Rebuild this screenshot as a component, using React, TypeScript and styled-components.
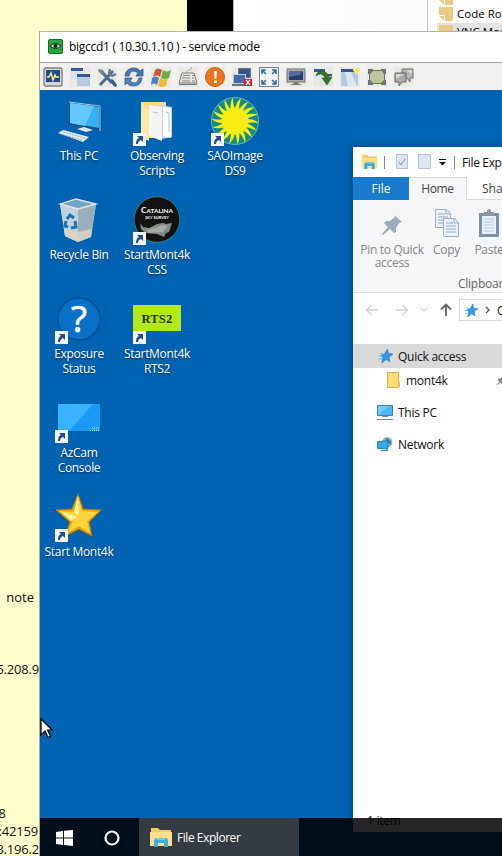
import React from 'react';
import styled, { createGlobalStyle } from 'styled-components';

const Global = createGlobalStyle`
  * { box-sizing: border-box; }
  html, body, #root { margin: 0; padding: 0; }
  body { font-family: "Open Sans", "Noto Sans", sans-serif; font-size: 12px; overflow: hidden; }
  svg { display: block; flex: none; }
`;

const Screen = styled.div`
  position: relative;
  width: 502px;
  height: 856px;
  overflow: hidden;
  background: #ffffcc;
`;

const Backdrop = styled.div`
  display: flex;
  height: 31px;
  padding-left: 187px;
`;
const BlackStrip = styled.div`
  width: 46px;
  background: #000;
`;
const BlankPane = styled.div`
  width: 194px;
  border-left: 1px solid #b5b5b5;
  background: linear-gradient(90deg, #fff, #fbfbfb);
`;
const BookmarkPane = styled.div`
  flex: 1;
  overflow: hidden;
  border-left: 1px solid #bdbdbd;
  background: #fff;
`;
const Bookmark = styled.div<{ $active?: boolean; $first?: boolean }>`
  display: flex;
  gap: 4px;
  height: ${p => (p.$first ? 5 : 18)}px;
  align-items: ${p => (p.$first ? 'flex-end' : 'center')};
  overflow: hidden;
  margin-left: 9px;
  padding-left: 2px;
  line-height: 18px;
  white-space: nowrap;
  font-size: 11.5px;
  background: ${p => (p.$active ? '#e2e2e2' : 'transparent')};
`;

const Notes = styled.div`
  position: absolute;
  left: 0;
  top: 588px;
  width: 39px;
  height: 268px;
  color: #111;
  font-size: 13px;
  line-height: 18px;
`;
const NoteLine = styled.div<{ $gap?: number; $shift?: number; $tight?: number }>`
  display: flex;
  justify-content: flex-end;
  margin-top: ${p => p.$gap || 0}px;
  padding-right: ${p => p.$shift || 0}px;
  letter-spacing: ${p => p.$tight || 0}px;
  white-space: nowrap;
`;

const RemoteWindow = styled.div`
  position: absolute;
  left: 39px;
  top: 31px;
  width: 480px;
  height: 825px;
  display: flex;
  flex-direction: column;
  border-left: 1px solid #a9a9a0;
  border-top: 1px solid #b3b3b3;
`;
const RemoteTitle = styled.div`
  display: flex;
  align-items: center;
  gap: 6px;
  height: 31px;
  padding: 0 0 1px 8px;
  background: #fff;
  color: #000;
  border-bottom: 1px solid #a0a0a0;
  letter-spacing: -0.28px;
  white-space: nowrap;
`;
const RemoteTools = styled.div`
  display: flex;
  align-items: center;
  gap: 7px;
  height: 27px;
  padding-left: 3px;
  background: #f0f0f0;
`;
const Desktop = styled.div`
  position: relative;
  flex: 1;
  overflow: hidden;
  background: #0063b1;
`;
const IconGrid = styled.div`
  display: grid;
  grid-auto-flow: column;
  grid-template-rows: repeat(5, 99px);
  grid-auto-columns: 78px;
  padding-top: 7px;
`;
const Shortcut = styled.div<{ $col: number; $row: number }>`
  grid-column: ${p => p.$col};
  grid-row: ${p => p.$row};
  display: flex;
  flex-direction: column;
  align-items: center;
`;
const IconFrame = styled.div`
  position: relative;
  width: 48px;
  height: 48px;
`;
const ArrowBadge = styled.svg`
  position: absolute;
  left: 0;
  bottom: -1px;
`;
const Label = styled.div`
  margin-top: 3px;
  color: #fff;
  font-size: 12px;
  line-height: 15px;
  letter-spacing: -0.32px;
  text-align: center;
  white-space: pre;
  text-shadow: 0 1px 2px rgba(0, 0, 0, 0.55);
`;

const Explorer = styled.div`
  position: absolute;
  left: 313px;
  top: 57px;
  width: 200px;
  height: 685px;
  display: flex;
  flex-direction: column;
  background: #fff;
  box-shadow: 0 0 7px rgba(0, 0, 0, 0.38);
  color: #111;
  letter-spacing: -0.25px;
  white-space: nowrap;
`;
const ExplorerTitle = styled.div`
  display: flex;
  align-items: center;
  height: 30px;
  padding-left: 8px;
`;
const TitleText = styled.span`
  letter-spacing: -0.35px;
`;
const Divider = styled.i<{ $left: number; $right: number }>`
  width: 1px;
  height: 13px;
  margin: 0 ${p => p.$right}px 0 ${p => p.$left}px;
  background: #8d8080;
`;
const Tabs = styled.div`
  display: flex;
  height: 23px;
`;
const Tab = styled.div<{ $kind: 'file' | 'active' | 'plain'; $w: number }>`
  display: flex;
  align-items: center;
  justify-content: ${p => (p.$kind === 'plain' ? 'flex-start' : 'center')};
  width: ${p => p.$w}px;
  flex: none;
  padding-left: ${p => (p.$kind === 'plain' ? 15 : 0)}px;
  padding-bottom: ${p => (p.$kind === 'active' ? 2 : 0)}px;
  letter-spacing: ${p => (p.$kind === 'active' ? -0.35 : 0)}px;
  color: ${p => (p.$kind === 'file' ? '#fff' : '#444')};
  background: ${p => ({ file: '#1979ca', active: '#f5f6f7', plain: '#fff' })[p.$kind]};
  border: solid #dadbdc;
  border-width: ${p => ({ file: '0', active: '1px 1px 0 0', plain: '0 0 1px 0' })[p.$kind]};
`;
const Ribbon = styled.div`
  display: flex;
  flex-direction: column;
  justify-content: space-between;
  height: 93px;
  background: #f5f6f7;
  border-bottom: 1px solid #dadbdc;
  color: #858585;
`;
const RibbonRow = styled.div`
  display: flex;
  align-items: flex-start;
  padding-top: 9px;
`;
const RibbonButton = styled.div<{ $w: number }>`
  display: flex;
  flex-direction: column;
  align-items: center;
  width: ${p => p.$w}px;
  flex: none;
  line-height: 13px;
  letter-spacing: -0.3px;
  text-align: center;
  white-space: pre;
  & > svg { margin-bottom: 5px; }
`;
const GroupName = styled.div`
  padding: 0 0 0 105px;
  line-height: 16px;
  color: #666;
`;
const NavRow = styled.div`
  display: flex;
  align-items: center;
  height: 34px;
  padding-left: 12px;
`;
const AddressBox = styled.div`
  display: flex;
  align-items: center;
  width: 120px;
  height: 22px;
  margin-left: 6px;
  padding-left: 5px;
  gap: 7px;
  border: 1px solid #d9d9d9;
  flex: none;
`;
const Tree = styled.div`
  display: flex;
  flex-direction: column;
  padding-top: 17px;
`;
const TreeItem = styled.div<{ $indent: number; $gap: number; $selected?: boolean }>`
  display: flex;
  align-items: center;
  gap: 5px;
  height: 24px;
  margin-top: ${p => p.$gap}px;
  padding: 0 0 0 ${p => p.$indent}px;
  background: ${p => (p.$selected ? '#d9d9d9' : 'transparent')};
  & > svg:last-child:not(:first-child) { margin-left: 43px; }
`;
const StatusBar = styled.div`
  margin-top: auto;
  height: 21px;
  padding-left: 14px;
  line-height: 20px;
`;

const Taskbar = styled.div`
  position: absolute;
  left: 0;
  right: 0;
  bottom: 0;
  height: 38px;
  display: flex;
  background: rgba(0, 0, 0, 0.85);
`;
const TaskIcon = styled.div<{ $w: number; $nudge?: number }>`
  display: flex;
  align-items: center;
  justify-content: center;
  width: ${p => p.$w}px;
  padding: 1px ${p => p.$nudge || 0}px 0 0;
`;
const TaskButton = styled.div`
  display: flex;
  align-items: center;
  gap: 5px;
  width: 160px;
  padding-left: 11px;
  background: #343b42;
  color: #fff;
  letter-spacing: -0.45px;
`;
const Pointer = styled.svg`
  position: absolute;
  left: 39px;
  top: 717px;
`;

const SideBookIcon = () => (
  <svg width="14" height="14" viewBox="0 0 14 14">
    <path d="M0 0h14v14H6V8H0z" fill="#eec981" />
    <path d="M0 9h5v5z" fill="#eec981" />
  </svg>
);

const StarShape = ({ size = 14 }: { size?: number }) => (
  <svg width={size} height={size} viewBox="0 0 14 14">
    <path d="M8.5 0l.8 4.600 4.700.500-4 2.800.800 4.900-3.500-2.300L2.800 14l1.200-5.200L2 6.200l3.500-1.100z" fill="#2f9be6" stroke="#2378b5" strokeWidth=".6" />
    <path d="M1 4.500h3M0 7h3M0 10h3" stroke="#6bb4e5" />
  </svg>
);

const FolderExplorer = ({ w = 22, h = 19 }: { w?: number; h?: number }) => (
  <svg width={w} height={h} viewBox="0 0 22 19">
    <path d="M1 0h7l2 2h11v16H1z" fill="#f4ca62" />
    <path d="M0 4h22v14H0z" fill="#fde08c" />
    <path d="M4 19v-6q0-3 3-3h8q3 0 3 3v6h-4v-4H8v4z" fill="#3fa9e0" />
    <path d="M7 10h8l1 2H6z" fill="#72c9ef" />
  </svg>
);

const PinIcon = ({ s = 22, c = '#9aabbb' }: { s?: number; c?: string }) => (
  <svg width={s} height={s} viewBox="0 0 22 22">
    <path d="M13 1l8 7-3 1-3 5v4l-2 1-4-4-7 6-1-1 6-7-4-4 2-2h4l5-4z" fill={c} />
  </svg>
);

const Monitor = () => (
  <svg width="16" height="15" viewBox="0 0 16 15">
    <path d="M.5.5h15v10H.5z" fill="#49b6f4" stroke="#3d83ac" />
    <path d="M1 10V1h11z" fill="#75cdfc" />
    <path d="M5 11h6v1H5zM0 14h16v1H0z" fill="#698ca2" />
  </svg>
);

/* Toolbar drawings, each on a 20 x 20 grid. */
const toolDrawings: React.ReactNode[] = [
  <>
    <rect x="1" y="1" width="18" height="18" rx="2" fill="#d8d8d2" stroke="#858581" strokeWidth="1.4" />
    <rect x="3" y="3" width="14" height="12" fill="#234b8c" />
    <path d="M4 10h2l2-4 2 7 2-5 1 2h3" fill="none" stroke="#fff28c" strokeWidth="1.4" />
  </>,
  <>
    <rect x="1" y="1" width="12" height="11" fill="#d8e1ef" />
    <path d="M1 1h12v3H1z" fill="#345b97" />
    <rect x="7" y="7" width="13" height="12" fill="#b8c9e2" />
    <path d="M7 7h13v3H7z" fill="#34598d" />
  </>,
  <>
    <path d="M4 4l11 12" stroke="#53728e" strokeWidth="3.3" />
    <path d="M16 4L3 18" stroke="#486c92" strokeWidth="2.8" />
    <path d="M13 2l-1 4 3 3 4-2" fill="none" stroke="#60788c" strokeWidth="2.2" />
    <path d="M2 2l4 1 1 3-2 2-4-4" fill="#758895" />
    <path d="M15 14l3 4" stroke="#395b83" strokeWidth="3.5" strokeLinecap="round" />
  </>,
  <>
    <path d="M1 9q1-8 9-8 4 0 6 3l3-2v7h-7l2-3q-2-2-5-2-3 0-4 5z" fill="#4577b2" stroke="#315c91" strokeWidth=".8" />
    <path d="M18 11q-1 8-9 8-4 0-6-3l-2 2v-7h7l-2 3q2 2 5 2 3 0 4-5z" fill="#5283b8" stroke="#315c91" strokeWidth=".8" />
  </>,
  <>
    <path d="M4 3q3-3 7 0L9 10Q6 7 2 10z" fill="#ce593b" />
    <path d="M12 3q4 3 8 0l-2 8q-4 2-8 0z" fill="#6cab48" />
    <path d="M1 11q4-3 7 0l-2 7q-3-3-6 0z" fill="#4c83bb" />
    <path d="M9 11q4 3 8 0l-2 8q-4 2-8 0z" fill="#edbd42" />
  </>,
  <>
    <path d="M9 7Q7 4 11 3q4 0 2-3" fill="none" stroke="#aaa" />
    <path d="M4 6h12l3 10H1z" fill="#e5e5dc" stroke="#777" />
    <path d="M5 8.500h7M4 11h8M4 14h8M14 8.500h2M14 11h2M14 14h3" stroke="#888" strokeWidth="1.200" />
    <path d="M1 17.500h18" stroke="#777" />
  </>,
  <>
    <circle cx="10" cy="10" r="9.5" fill="#ed741d" stroke="#c4601d" />
    <path d="M9 4h3l-.7 8H9.7zM9 13.5h3V16H9z" fill="#fff" />
  </>,
  <>
    <rect x="6.5" y="1.5" width="12" height="9" fill="#35568a" stroke="#6d7a83" />
    <rect x="1.5" y="7.5" width="12" height="9" fill="#446ea8" stroke="#c3cbd2" />
    <path d="M0 18h12" stroke="#69747c" strokeWidth="2" />
    <path d="M12 12h8v7h-8z" fill="#d51926" />
    <path d="M14 13l4 5m0-5l-4 5" stroke="#fff" strokeWidth="1.3" />
  </>,
  <>
    <rect x=".5" y=".5" width="19" height="19" fill="#eef2f2" stroke="#79817f" />
    <path d="M7 7L3 3m0 4V3h4M13 7l4-4m-4 0h4v4M7 13l-4 4m0-4v4h4M13 13l4 4m0-4v4h-4" fill="none" stroke="#356b9e" strokeWidth="1.7" />
  </>,
  <>
    <rect x="1" y="2" width="18" height="13" fill="#aaa" stroke="#777" />
    <rect x="3" y="4" width="14" height="9" fill="#243b70" />
    <path d="M3 4h14l-3 4-11 2z" fill="#536b9a" />
    <path d="M8 15h4l1 2h2v1H5v-1h2z" fill="#777" />
  </>,
  <>
    <path d="M1 2h11v9H1z" fill="#dae5f0" />
    <path d="M1 2h11v3H1z" fill="#315b94" />
    <path d="M7 7h12v11H7z" fill="#dae3ec" />
    <path d="M12 7h7v2h-7z" fill="#315b94" />
    <path d="M3 9Q4 4 9 4t7 6h3l-5 8-5-7h3q-1-3-4-4-3 0-5 2z" fill="#397127" stroke="#244e20" strokeWidth=".5" />
  </>,
  <>
    <path d="M1 2h17v17H1z" fill="#b4c8e1" />
    <path d="M5 5h6l6 14H8z" fill="#dbe5f0" />
    <path d="M1 2h15v3H1z" fill="#2e588d" />
    <path d="M16 0l1 2 3 1-2 2-1 2-2-2-2-2 3-1z" fill="#ffe52c" stroke="#fff27d" />
  </>,
  <>
    <path d="M1 2h5v1h8V2h5v5h-1v6h1v5h-5v-1H6v1H1v-5h1V7H1z" fill="#65745f" />
    <path d="M6 4h9l2 3v6l-3 3H6l-3-3V7z" fill="#bcc59e" />
    <path d="M2 3h3L2 6zM18 3v3l-3-3zM2 17v-3l3 3zM18 17h-3l3-3z" fill="#6680a5" />
  </>,
  <>
    <path d="M8 2h11v9h-3v4l-3-4H8z" fill="#b7b7b3" stroke="#73736f" />
    <path d="M1 6h11v9H8l-3 4v-4H1z" fill="#aaa" stroke="#666" />
    <path d="M2 7h8L2 12zM12 3h6v4z" fill="#d7d7d3" />
  </>,
];

const ToolIcon = ({ n }: { n: number }) => (
  <svg width="20" height="20" viewBox="0 0 20 20">
    <path d="M0 0h20v20H0z" fill="#e9e9e2" />
    {toolDrawings[n]}
  </svg>
);

const sunRays = Array.from({ length: 18 }, (_, i) => {
  const a = (i * Math.PI) / 9;
  const pt = (r: number, t: number) => `${24 + r * Math.cos(t)},${24 + r * Math.sin(t)}`;
  return `M${pt(12, a - 0.17)} Q${pt(19, a - 0.12)} ${pt(23.5, a + 0.08)} Q${pt(17, a + 0.06)} ${pt(12, a + 0.17)}Z`;
}).join(' ');

const art: Record<string, React.ReactNode> = {
  pc: (
    <>
      <path d="M14 5l31 4v24l-31-6z" fill="#234b69" />
      <path d="M15 6l29 4v21l-29-5z" fill="#32aff7" />
      <path d="M15 6l24 3-9 20-15-3z" fill="#65c8fd" />
      <path d="M14 5l31 4v25" stroke="#b4c8d4" fill="none" />
      <path d="M22 32l7-2 9 3-7 2z" fill="#dbe9ef" />
      <path d="M8 33l26 7-6 5L3 36z" fill="#e4edf1" />
      <path d="M8 35l22 6M5 37l22 6" stroke="#6d8ca5" strokeDasharray="2 1" strokeWidth=".7" />
    </>
  ),
  bin: (
    <>
      <path d="M5 8l16-5 20 5-5 33-13 5-13-6z" fill="#a9bfcc" />
      <path d="M5 8l18 5v33l-13-6z" fill="#c3d1da" />
      <path d="M41 8l-18 5v33l13-5z" fill="#9aafbc" />
      <path d="M5 8l16-5 20 5-18 5z" fill="#75a5c5" stroke="#e0e7e9" strokeWidth="1.3" />
      <path d="M9 33l14 3 14-3-1 8-13 5-13-6z" fill="#dcd5c6" opacity=".85" />
      <path d="M12 23l3-4 4 3M20 25l1 6-5 1M13 31l-3-1 1-5" fill="none" stroke="#1475b9" strokeWidth="3" />
    </>
  ),
  folder: (
    <>
      <path d="M8 5h25v36H14l-6 2z" fill="#f8da87" />
      <path d="M26 8l13 2v30l-10 2z" fill="#c8d7df" />
      <path d="M16 8l13 2v34l-13-5z" fill="#f4f4f4" />
      <path d="M30 10l8 1v30l-8-2z" fill="#fff" />
      <path d="M8 5l8 8v31l-8-4z" fill="#ffe8a3" />
      <path d="M33 15l3 1v19M20 15l5 1" stroke="#b5c3cb" fill="none" />
    </>
  ),
  sun: (
    <>
      <circle cx="24" cy="24" r="23.5" fill="#148b88" stroke="#64b4ad" />
      <circle cx="24" cy="24" r="13.5" fill="#f7ed11" />
      <path d={sunRays} fill="#f7ed11" />
    </>
  ),
  css: (
    <>
      <circle cx="24" cy="23.500" r="22.8" fill="#111211" stroke="#52918a" strokeWidth=".7" />
      <path d="M7 27l3 4 6 1 8-4 6-1 3 1 6-1-3 9-3 1-2 4-7-3-12-1-4-4z" fill="#858a86" />
      <path d="M13 34l9-2 7-3 6 1-5 6-14 1z" fill="#a6aaa5" />
      <text x="24" y="17" textAnchor="middle" fill="#fff" fontFamily="Lato" fontWeight="700" fontSize="6.4"><tspan fontSize="8.4">C</tspan>ATALINA</text>
      <text x="24" y="23" textAnchor="middle" fill="#fff" fontFamily="Lato" fontWeight="700" fontSize="4">SKY SURVEY</text>
    </>
  ),
  help: (
    <>
      <circle cx="24" cy="24" r="21" fill="#0870c6" stroke="#064e96" strokeWidth="1.5" />
      <text x="24" y="37" textAnchor="middle" fill="#fff" stroke="#fff" strokeWidth=".7" fontFamily="Open Sans" fontWeight="400" fontSize="37">?</text>
    </>
  ),
  rts: (
    <>
      <path d="M0 10h48v26H0z" fill="#b3e91b" />
      <text x="24" y="27.5" textAnchor="middle" fill="#20351b" fontFamily="Liberation Serif" fontWeight="700" fontSize="12.5" letterSpacing=".2">RTS2</text>
    </>
  ),
  console: (
    <>
      <path d="M3 10h42v27H3z" fill="#199af7" />
      <path d="M3 10h35L14 37H3z" fill="#39b1ff" />
      <path d="M37 34h7M35 36.500h10" stroke="#d1efff" strokeWidth="1" strokeDasharray="1 1" />
    </>
  ),
  star: (
    <>
      <path d="M24 3l6 14 17 1-12 11 3 16-14-8-14 7 4-15L2 18l16-1z" fill="#765315" opacity=".65" />
      <path d="M23 1l5 15 18 1-12 12 3 14-13-7-14 7 5-14L1 17l16-1z" fill="#e9a913" stroke="#ae791c" strokeWidth="1" strokeLinejoin="round" />
      <path d="M23 3l4 15 16 1-11 9 3 12-11-7-11 7 5-12L4 18l15 1z" fill="#ffd53b" />
      <path d="M23 3l1 20-5-4zM5 18l17 6-6 4z" fill="#fff1a4" />
    </>
  ),
};

type Item = { art: string; text: string; col: number; row: number; arrow?: boolean };
const items: Item[] = [
  { art: 'pc', text: 'This PC', col: 1, row: 1 },
  { art: 'bin', text: 'Recycle Bin', col: 1, row: 2 },
  { art: 'help', text: 'Exposure\nStatus', col: 1, row: 3, arrow: true },
  { art: 'console', text: 'AzCam\nConsole', col: 1, row: 4, arrow: true },
  { art: 'star', text: 'Start Mont4k', col: 1, row: 5, arrow: true },
  { art: 'folder', text: 'Observing\nScripts', col: 2, row: 1, arrow: true },
  { art: 'css', text: 'StartMont4k\nCSS', col: 2, row: 2, arrow: true },
  { art: 'rts', text: 'StartMont4k\nRTS2', col: 2, row: 3, arrow: true },
  { art: 'sun', text: 'SAOImage\nDS9', col: 3, row: 1, arrow: true },
];

const Arrow = ({ dim = false, rotate = 0, gap = 0 }: { dim?: boolean; rotate?: number; gap?: number }) => (
  <svg width={14 + gap} height="14" viewBox={`0 0 ${14 + gap} 14`}>
    <path transform={`rotate(${rotate} 7 7)`} d="M13 7H2m4.5-5L1.5 7l5 5" fill="none" stroke={dim ? '#d2d2d2' : '#666'} strokeWidth={dim ? 1.3 : 1.8} />
  </svg>
);

const Sheets = () => (
  <svg width="26" height="29" viewBox="0 0 26 29">
    {[[1, 0], [9, 9]].map(([x, y]) => (
      <g key={x} transform={`translate(${x} ${y})`}>
        <path d="M.5.5h11l4 4v14H.5z" fill="#eaf1fa" stroke="#9bb1cf" />
        <path d="M3 5h7M3 8h10M3 11h10M3 14h10M11 1v4h4" fill="none" stroke="#91abd0" />
      </g>
    ))}
  </svg>
);

const Clipboard = () => (
  <svg width="22" height="29" viewBox="0 0 22 29">
    <path d="M1 4h20v24H1z" fill="#7d91ac" />
    <path d="M4 7h14v18H4z" fill="#eaf1fa" />
    <path d="M6 6V3h3q0-3 2-3t2 3h3v3z" fill="#8e99a4" />
    <path d="M6 10h10M6 13h10M6 16h10M6 19h10M6 22h10" stroke="#b5c8e0" />
  </svg>
);

export default function App() {
  return (
    <Screen>
      <Global />
      <Backdrop>
        <BlackStrip />
        <BlankPane />
        <BookmarkPane>
          <Bookmark $first><SideBookIcon /></Bookmark>
          <Bookmark><SideBookIcon />Code Rot</Bookmark>
          <Bookmark $active><SideBookIcon />VNC Mont</Bookmark>
        </BookmarkPane>
      </Backdrop>
      <Notes>
        <NoteLine $shift={5}>note</NoteLine>
        <NoteLine $gap={54} $tight={-0.2}>5.208.9</NoteLine>
        <NoteLine $gap={126} $shift={33}>8</NoteLine>
        <NoteLine $shift={1} $tight={-0.2}>:42159</NoteLine>
        <NoteLine $tight={-0.2}>3.196.2</NoteLine>
      </Notes>
      <RemoteWindow>
        <RemoteTitle>
          <svg width="15" height="15" viewBox="0 0 15 15">
            <rect x=".5" y=".5" width="14" height="14" rx="1.5" fill="#25a53b" stroke="#17672a" />
            <path d="M2 7q5-5 11 0-5 5-11 0z" fill="#bfe0bd" stroke="#172b18" />
            <circle cx="7.5" cy="7" r="2" fill="#17241a" />
          </svg>
          bigccd1 ( 10.30.1.10 ) - service mode
        </RemoteTitle>
        <RemoteTools>{toolDrawings.map((_, i) => <ToolIcon key={i} n={i} />)}</RemoteTools>
        <Desktop>
          <IconGrid>
            {items.map(it => (
              <Shortcut key={it.art} $col={it.col} $row={it.row}>
                <IconFrame>
                  <svg width="48" height="48" viewBox="0 0 48 48">{art[it.art]}</svg>
                  {it.arrow && (
                    <ArrowBadge width="13" height="13" viewBox="0 0 13 13">
                      <path d="M0 0h13v13H0z" fill="#f5f6f8" />
                      <path d="M3 11Q3 6 6 5L4 3h6v6L8 7Q5 8 5 11z" fill="#294b8b" />
                    </ArrowBadge>
                  )}
                </IconFrame>
                <Label>{it.text}</Label>
              </Shortcut>
            ))}
          </IconGrid>
          <Explorer>
            <ExplorerTitle>
              <FolderExplorer w={17} h={14} />
              <Divider $left={6} $right={11} />
              <svg width="43" height="16" viewBox="0 0 43 16">
                <path d="M.5.5h11v14H.5zM22.500 .5h12v14h-12z" fill="#dce5f2" stroke="#b3c2d9" />
                <path d="M3 8l2 3 4-6" fill="none" stroke="#7796bc" />
              </svg>
              <svg width="7" height="8" viewBox="0 0 7 8"><path d="M0 1.500h7" stroke="#111" /><path d="M0 4h7L3.500 7.500z" fill="#111" /></svg>
              <Divider $left={8} $right={7} />
              <TitleText>File Explorer</TitleText>
            </ExplorerTitle>
            <Tabs>
              <Tab $kind="file" $w={56}>File</Tab>
              <Tab $kind="active" $w={58}>Home</Tab>
              <Tab $kind="plain" $w={86}>Share</Tab>
            </Tabs>
            <Ribbon>
              <RibbonRow>
                <RibbonButton $w={78}><svg width="22" height="29" viewBox="0 0 22 29"><g transform="translate(0 5)"><PinIcon /></g></svg>{'Pin to Quick\naccess'}</RibbonButton>
                <RibbonButton $w={31}><Sheets />Copy</RibbonButton>
                <RibbonButton $w={54}><Clipboard />Paste</RibbonButton>
              </RibbonRow>
              <GroupName>Clipboard</GroupName>
            </Ribbon>
            <NavRow>
              <Arrow dim gap={16} />
              <Arrow dim rotate={180} gap={8} />
              <svg width="22" height="8" viewBox="0 0 22 8"><path d="M4 2l3 3 3-3" fill="none" stroke="#ccc" /></svg>
              <Arrow rotate={90} />
              <AddressBox><StarShape size={13} /><svg width="5" height="8" viewBox="0 0 5 8"><path d="M1 1l3 3-3 3" fill="none" stroke="#555" strokeWidth="1.3" /></svg><span>Quick access</span></AddressBox>
            </NavRow>
            <Tree>
              <TreeItem $indent={26} $gap={0} $selected><StarShape />Quick access</TreeItem>
              <TreeItem $indent={34} $gap={0}>
                <svg width="14" height="16" viewBox="0 0 14 16"><path d="M.5.5h11v15H.5z" fill="#ffdc77" stroke="#e0b13e" /><path d="M11 10h2v5h-2z" fill="#edbd4d" /></svg>
                mont4k
                <PinIcon s={11} c="#888" />
              </TreeItem>
              <TreeItem $indent={24} $gap={8}><Monitor /><span>This PC</span></TreeItem>
              <TreeItem $indent={24} $gap={8}>
                <svg width="16" height="16" viewBox="0 0 17 16"><circle cx="11" cy="6" r="5.500" fill="#8fbccc" /><path d="M9 1q3 1 6 4v4l-5-3z" fill="#477e94" /><path d="M.5 5.500l11-1v9l-11-1z" fill="#34a9ea" stroke="#2479ac" /><path d="M4 15h8" stroke="#357ba1" /></svg>
                <span>Network</span>
              </TreeItem>
            </Tree>
            <StatusBar>1 item</StatusBar>
          </Explorer>
          <Taskbar>
            <TaskIcon $w={48}>
              <svg width="17" height="16" viewBox="0 0 17 16"><path d="M0 2l7-1v6.500H0zM8 .8L17 0v7.500H8zM0 8.500h7V15l-7-1zM8 8.500h9V16l-9-.9z" fill="#fff" /></svg>
            </TaskIcon>
            <TaskIcon $w={51} $nudge={4}>
              <svg width="16" height="16" viewBox="0 0 16 16"><circle cx="8" cy="8" r="6.500" fill="none" stroke="#f2f2f2" strokeWidth="2.200" /></svg>
            </TaskIcon>
            <TaskButton><FolderExplorer />File Explorer</TaskButton>
          </Taskbar>
        </Desktop>
      </RemoteWindow>
      <Pointer width="15" height="23" viewBox="0 0 15 23">
        <path d="M2 2v16l4-4 3 6.500 2.500-1.500-3-6h4.500z" fill="#fff" stroke="#000" strokeWidth="1.200" />
      </Pointer>
    </Screen>
  );
}
